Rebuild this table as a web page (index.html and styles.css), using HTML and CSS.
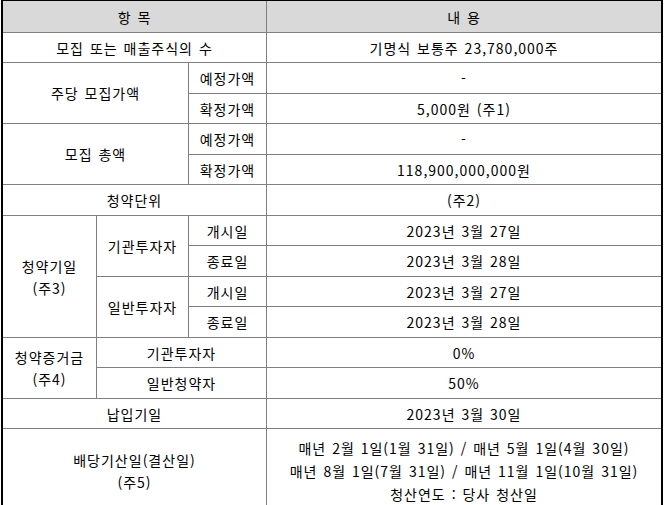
FILE: index.html
```html
<!DOCTYPE html>
<html lang="ko">
<head>
<meta charset="utf-8">
<title>공모개요</title>
<link rel="stylesheet" href="styles.css">
</head>
<body>
<div class="sheet">
  <div class="cell head span3">항 목</div>
  <div class="cell head">내 용</div>

  <div class="cell span3">모집 또는 매출주식의 수</div>
  <div class="cell">기명식 보통주 23,780,000주</div>

  <div class="cell span2 rows2">주당 모집가액</div>
  <div class="cell">예정가액</div>
  <div class="cell">-</div>
  <div class="cell">확정가액</div>
  <div class="cell">5,000원 (주1)</div>

  <div class="cell span2 rows2">모집 총액</div>
  <div class="cell">예정가액</div>
  <div class="cell">-</div>
  <div class="cell">확정가액</div>
  <div class="cell">118,900,000,000원</div>

  <div class="cell span3">청약단위</div>
  <div class="cell">(주2)</div>

  <div class="cell rows4">청약기일<br>(주3)</div>
  <div class="cell rows2">기관투자자</div>
  <div class="cell">개시일</div>
  <div class="cell">2023년 3월 27일</div>
  <div class="cell">종료일</div>
  <div class="cell">2023년 3월 28일</div>
  <div class="cell rows2">일반투자자</div>
  <div class="cell">개시일</div>
  <div class="cell">2023년 3월 27일</div>
  <div class="cell">종료일</div>
  <div class="cell">2023년 3월 28일</div>

  <div class="cell rows2">청약증거금<br>(주4)</div>
  <div class="cell span2">기관투자자</div>
  <div class="cell">0%</div>
  <div class="cell span2">일반청약자</div>
  <div class="cell">50%</div>

  <div class="cell span3">납입기일</div>
  <div class="cell">2023년 3월 30일</div>

  <div class="cell span3">배당기산일(결산일)<br>(주5)</div>
  <div class="cell tall">매년 2월 1일(1월 31일) / 매년 5월 1일(4월 30일)<br>매년 8월 1일(7월 31일) / 매년 11월 1일(10월 31일)<br>청산연도 : 당사 청산일</div>
</div>
</body>
</html>
```

FILE: styles.css
```css
html, body {
  margin: 0;
  padding: 0;
  background: #fff;
  overflow: hidden;
}

body {
  font-family: "Noto Sans CJK KR", "Noto Sans", sans-serif;
  font-size: 14px;
  color: #000;
}

.sheet {
  display: inline-grid;
  margin-left: 1px;
  grid-template-columns: 93px 91px 77px 394px;
  grid-template-rows: 31px 29px 30px 29px 30px 29px 30px 29px 30px 29px 30px 29px 30px 29px 84px;
  gap: 1px;
  background: #808080;
  border-top: 1px solid #000;
  border-left: 2px solid #000;
  border-right: 2px solid #000;
}

.cell {
  background: #fff;
  display: flex;
  align-items: center;
  justify-content: center;
  text-align: center;
  white-space: nowrap;
  letter-spacing: 1px;
  word-spacing: 1px;
  line-height: 22px;
}

.head {
  background: #d9d9d9;
}

.span2 { grid-column: span 2; }
.span3 { grid-column: span 3; }
.rows2 { grid-row: span 2; }
.rows4 { grid-row: span 4; }

.tall {
  line-height: 23px;
}
```
